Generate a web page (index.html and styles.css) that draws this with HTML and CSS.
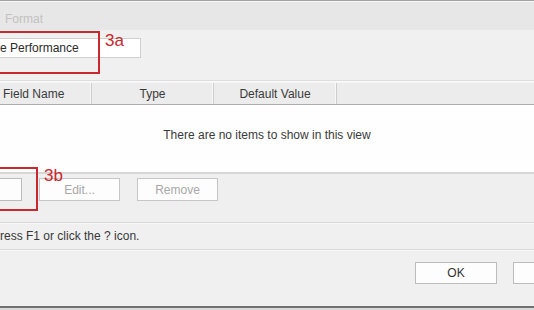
FILE: index.html
```html
<!DOCTYPE html>
<html>
<head>
    <meta charset="utf-8">
    <title>Format</title>
    <link rel="stylesheet" href="styles.css">
</head>
<body>
    <div class="dialog">
        <div class="frame-top"></div>
        <div class="titlebar">Format</div>

        <div class="name-row">
            <div class="name-input">e Performance</div>
            <div class="callout callout-a"></div>
            <div class="callout-label label-a">3a</div>
        </div>

        <div class="sep"></div>

        <div class="header">
            <div class="col col-name">Field Name</div>
            <div class="col col-type">Type</div>
            <div class="col col-default">Default Value</div>
            <div class="col col-rest"></div>
        </div>

        <div class="list">There are no items to show in this view</div>

        <div class="buttons">
            <button class="btn btn-add" aria-label="Add"></button>
            <button class="btn" disabled>Edit...</button>
            <button class="btn" disabled>Remove</button>
            <div class="callout callout-b"></div>
            <div class="callout-label label-b">3b</div>
        </div>

        <div class="help">ress F1 or click the ? icon.</div>

        <div class="footer">
            <button class="btn btn-ok">OK</button>
            <button class="btn btn-ok" aria-label="Cancel"></button>
        </div>

        <div class="frame-bottom"></div>
    </div>
</body>
</html>
```

FILE: styles.css
```css
body {
    margin: 0;
    padding: 0;
    background: #d8d8d8;
    font-family: "Liberation Sans", Arial, sans-serif;
    font-size: 12px;
    color: #383838;
}
.dialog {
    width: 534px;
    height: 308px;
    overflow: hidden;
    background: #f0f0f0;
    display: flex;
    flex-direction: column;
}
.frame-top {
    height: 1px;
    background: #a3a3a3;
    border-bottom: 1px solid #f6f6f6;
    flex: none;
}
.titlebar {
    height: 28px;
    line-height: 34px;
    overflow: hidden;
    padding-left: 5px;
    background: #e7e7e7;
    color: #c2c2c2;
    flex: none;
}
.name-row {
    position: relative;
    height: 50px;
    padding-top: 8px;
    box-sizing: border-box;
    flex: none;
}
.name-input {
    width: 141px;
    height: 20px;
    box-sizing: border-box;
    line-height: 19px;
    background: #fff;
    border: 1px solid #d0d0d0;
    border-left: none;
    color: #2a2a2a;
}
.callout {
    position: absolute;
    box-sizing: border-box;
    border: 2px solid #c8282e;
}
.callout-a {
    left: -10px;
    top: 1px;
    width: 110px;
    height: 43px;
}
.callout-label {
    position: absolute;
    color: #c8282e;
    font-size: 17px;
}
.label-a {
    left: 105px;
    top: 1px;
}
.sep {
    height: 1px;
    background: #dedede;
    border-bottom: 1px solid #f8f8f8;
    flex: none;
}
.header {
    display: flex;
    height: 21px;
    line-height: 22px;
    background: #ececec;
    border-top: 1px solid #f6f6f6;
    border-bottom: 1px solid #acacac;
    flex: none;
}
.col {
    box-sizing: border-box;
    border-right: 1px solid #cdcdcd;
    box-shadow: inset -1px 0 0 #f8f8f8;
    color: #3a3a3a;
}
.col-name {
    width: 92px;
    padding-left: 3px;
}
.col-type {
    width: 122px;
    text-align: center;
}
.col-default {
    width: 123px;
    text-align: center;
}
.col-rest {
    flex: 1;
    border-right: none;
    box-shadow: none;
}
.list {
    height: 67px;
    box-sizing: border-box;
    padding-top: 23px;
    text-align: center;
    background: #fefefe;
    color: #3a3a3a;
    flex: none;
}
.buttons {
    position: relative;
    display: flex;
    gap: 17px;
    height: 50px;
    box-sizing: border-box;
    padding-top: 4px;
    border-top: 2px solid #d6d6d6;
    background: #efefef;
    flex: none;
}
.btn {
    width: 81px;
    height: 23px;
    box-sizing: border-box;
    background: #fdfdfd;
    border: 1px solid #bcbcbc;
    border-radius: 0;
    font-family: "Liberation Sans", Arial, sans-serif;
    font-size: 12px;
    color: #333;
    padding: 0;
}
.btn:disabled {
    color: #a8a8a8;
    border-color: #c6c6c6;
}
.btn-add {
    margin-left: -59px;
}
.callout-b {
    left: -10px;
    top: -7px;
    width: 48px;
    height: 44px;
}
.label-b {
    left: 44px;
    top: -8px;
}
.help {
    height: 28px;
    box-sizing: border-box;
    line-height: 26px;
    border-top: 1px solid #d8d8d8;
    box-shadow: inset 0 1px 0 #f8f8f8;
    border-bottom: 1px solid #dadada;
    flex: none;
}
.footer {
    display: flex;
    gap: 16px;
    padding-left: 415px;
    padding-top: 11px;
    box-sizing: border-box;
    height: 56px;
    border-top: 1px solid #f8f8f8;
    flex: none;
}
.btn-ok {
    width: 82px;
    height: 22px;
    flex: none;
}
.frame-bottom {
    height: 2px;
    background: #707070;
    flex: none;
}
```
